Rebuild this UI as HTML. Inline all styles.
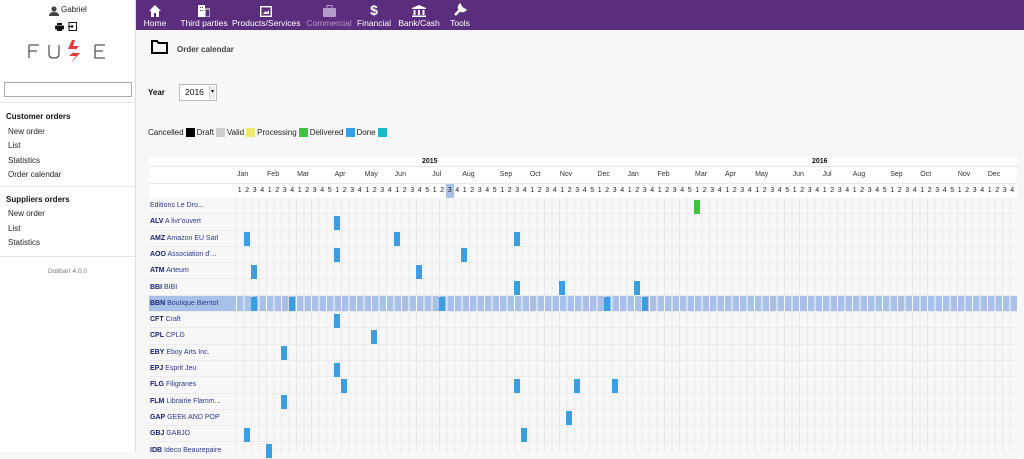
<!DOCTYPE html>
<html><head><meta charset="utf-8"><style>
*{margin:0;padding:0;box-sizing:border-box}
body{width:1024px;height:452px;overflow:hidden;background:#f7f7f7;font-family:"Liberation Sans",sans-serif;position:relative}
.side{position:absolute;left:0;top:0;width:136px;height:452px;background:#fff;border-right:1px solid #ddd}
.top{position:absolute;left:136px;top:0;width:888px;height:30px;background:#5a2d7d}
.nav{position:absolute;top:0;height:30px;color:#fff;font-size:8.5px;text-align:center;white-space:nowrap}
.nav .ic{height:17px;display:flex;justify-content:center;align-items:flex-end}
.nav .t{margin-top:1px}
.a{position:absolute}
.sm{font-size:8px;color:#222}
.b{position:absolute;width:6px;height:14px;background:#3a9ee0}
.row{position:absolute;left:149px;width:868px;height:16.3px;border-bottom:1px solid #ececec;font-size:7px;color:#2c3a8c;line-height:16px;padding-left:1px}
.row b{color:#1a2070}
.grid{position:absolute;left:236px;top:198px;width:781px;height:254px;background:repeating-linear-gradient(90deg,#e9e9e9 0,#e9e9e9 1px,transparent 1px,transparent 7.51px)}
.wk{position:absolute;left:236px;top:183px;display:flex;font-size:7px;color:#222;line-height:15px}
.wk span{width:7.51px;text-align:center;flex:none}
.mo{position:absolute;left:236px;top:166px;display:flex;font-size:7px;color:#333;line-height:17px}
.mo span{flex:none;padding-left:1px}
</style></head><body>
<div class="side">
 <div class="a" style="left:49px;top:3px;width:10px;height:10px">
  <svg width="10" height="10" viewBox="0 0 10 10"><circle cx="5" cy="3" r="2.6" fill="#444"/><path d="M0 10 Q0 6 5 6 Q10 6 10 10Z" fill="#444"/></svg></div>
 <div class="a" style="left:61px;top:5px;font-size:8px;color:#222">Gabriel</div>
 <div class="a" style="left:55px;top:18px"><svg width="9" height="8"><rect x="2" y="0" width="5" height="2" fill="#111"/><rect x="0" y="2.5" width="9" height="4" rx="1" fill="#111"/><rect x="2" y="5" width="5" height="3" fill="#111"/></svg></div>
 <div class="a" style="left:68px;top:18px"><svg width="9" height="9"><rect x="1" y="0.5" width="7.5" height="8" fill="none" stroke="#111"/><path d="M0 4.5H5M3.5 3L5 4.5 3.5 6" stroke="#111" fill="none"/></svg></div>
 <div class="a" style="left:28px;top:38px;width:80px;height:26px">
  <svg width="80" height="26"><g stroke="#555" stroke-width="1.3" fill="none"><path d="M1 7H11M1 7V20M1 13H9"/><path d="M21 7V16Q21 20 26 20Q31 20 31 16V7"/><path d="M67 7H77M67 7V20H77M67 13H75"/></g><path d="M44 2L40 11H49L41 18H48L43 25L52 15H45L51 8H45L47 2Z" fill="#e33a3a"/></svg></div>
 <div class="a" style="left:4px;top:82px;width:128px;height:15px;border:1px solid #aaa;background:#fff"></div>
 <div class="a" style="left:0;top:102px;width:135px;border-top:1px solid #e4e4e4"></div>
 <div class="a" style="left:6px;top:112px;font-size:8px;font-weight:bold;color:#111">Customer orders</div>
 <div class="a sm" style="left:8px;top:127px">New order</div>
 <div class="a sm" style="left:8px;top:141px">List</div>
 <div class="a sm" style="left:8px;top:156px">Statistics</div>
 <div class="a sm" style="left:8px;top:170px">Order calendar</div>
 <div class="a" style="left:0;top:186px;width:135px;border-top:1px solid #e4e4e4"></div>
 <div class="a" style="left:6px;top:195px;font-size:8px;font-weight:bold;color:#111">Suppliers orders</div>
 <div class="a sm" style="left:8px;top:209px">New order</div>
 <div class="a sm" style="left:8px;top:224px">List</div>
 <div class="a sm" style="left:8px;top:238px">Statistics</div>
 <div class="a" style="left:0;top:256px;width:135px;border-top:1px solid #e4e4e4"></div>
 <div class="a" style="left:0;top:268px;width:135px;text-align:center;font-size:6.5px;color:#777">Dolibarr 4.0.0</div>
</div>
<div class="top"></div>
<div class="nav" style="left:140px;width:30px"><div class="ic"><svg width="12" height="12"><path d="M6 0L0 6H2V12H5V8H7V12H10V6H12Z" fill="#fff"/></svg></div><div class="t">Home</div></div>
<div class="nav" style="left:179px;width:50px"><div class="ic"><svg width="12" height="12"><rect x="0" y="0" width="7" height="12" fill="#fff"/><rect x="7" y="4" width="5" height="8" fill="none" stroke="#fff"/><rect x="2" y="2" width="1" height="1" fill="#5a2d7d"/><rect x="4" y="2" width="1" height="1" fill="#5a2d7d"/><rect x="2" y="5" width="1" height="1" fill="#5a2d7d"/><rect x="4" y="5" width="1" height="1" fill="#5a2d7d"/></svg></div><div class="t">Third parties</div></div>
<div class="nav" style="left:232px;width:68px"><div class="ic"><svg width="12" height="11"><rect x="0.7" y="0.7" width="10.6" height="9.6" fill="none" stroke="#fff" stroke-width="1.4"/><path d="M3 8L5.5 5 7 6.5 9 4V8Z" fill="#fff"/></svg></div><div class="t">Products/Services</div></div>
<div class="nav" style="left:306px;width:46px;color:#b59ac9"><div class="ic"><svg width="13" height="12"><rect x="0" y="3" width="13" height="9" rx="1" fill="#b59ac9"/><rect x="4" y="0.5" width="5" height="3" fill="none" stroke="#b59ac9"/></svg></div><div class="t">Commercial</div></div>
<div class="nav" style="left:356px;width:36px"><div class="ic" style="font-size:14px;font-weight:bold;line-height:14px">$</div><div class="t">Financial</div></div>
<div class="nav" style="left:397px;width:44px"><div class="ic"><svg width="14" height="12"><path d="M7 0L0 3V4H14V3Z" fill="#fff"/><rect x="1.5" y="5" width="2" height="5" fill="#fff"/><rect x="6" y="5" width="2" height="5" fill="#fff"/><rect x="10.5" y="5" width="2" height="5" fill="#fff"/><rect x="0" y="10.5" width="14" height="1.5" fill="#fff"/></svg></div><div class="t">Bank/Cash</div></div>
<div class="nav" style="left:447px;width:26px"><div class="ic"><svg width="14" height="14"><path d="M2 12L8 6M7 2A3 3 0 1 0 12 7L10 6 8 4Z" stroke="#fff" stroke-width="2.5" fill="#fff"/></svg></div><div class="t">Tools</div></div>

<div class="a" style="left:151px;top:40px"><svg width="17" height="14"><path d="M1 1H6L7.5 3H16V13H1Z" fill="none" stroke="#000" stroke-width="2"/></svg></div>
<div class="a" style="left:177px;top:45px;font-size:8px;font-weight:bold;color:#444">Order calendar</div>
<div class="a" style="left:148px;top:88px;font-size:8px;font-weight:bold;color:#111">Year</div>
<div class="a" style="left:179px;top:84px;width:38px;height:17px;background:#fff;border:1px solid #bbb;font-size:8.5px;line-height:15px;padding-left:5px;color:#111">2016<span style="position:absolute;right:1px;top:1px;width:6px;height:13px;background:#eee;border-left:1px solid #ccc;font-size:6px;line-height:13px;text-align:center">▾</span></div>
<div class="a" style="left:148px;top:128px;font-size:8px;color:#222;display:flex;align-items:center;gap:2px;white-space:nowrap">Cancelled<i style="width:9px;height:9px;background:#000"></i> Draft <i style="width:9px;height:9px;background:#ccc"></i> Valid <i style="width:9px;height:9px;background:#eeea70"></i> Processing<i style="width:9px;height:9px;background:#3dc43d"></i> Delivered<i style="width:9px;height:9px;background:#3a9ee0"></i> Done <i style="width:9px;height:9px;background:#1bb8c9"></i></div>

<div class="a" style="left:149px;top:157px;width:868px;height:41px;background:#fff"></div>
<div class="a" style="left:149px;top:166px;width:868px;border-top:1px solid #e8e8e8"></div>
<div class="a" style="left:149px;top:183px;width:868px;border-top:1px solid #e8e8e8"></div>
<div class="a" style="left:422px;top:157px;font-size:7px;font-weight:bold;color:#111;line-height:10px">2015</div>
<div class="a" style="left:812px;top:157px;font-size:7px;font-weight:bold;color:#111;line-height:10px">2016</div>
<div class="mo">
<span style="width:30.04px">Jan</span><span style="width:30.04px">Feb</span><span style="width:37.55px">Mar</span><span style="width:30.04px">Apr</span><span style="width:30.04px">May</span><span style="width:37.55px">Jun</span><span style="width:30.04px">Jul</span><span style="width:37.55px">Aug</span><span style="width:30.04px">Sep</span><span style="width:30.04px">Oct</span><span style="width:37.55px">Nov</span><span style="width:30.04px">Dec</span>
<span style="width:30.04px">Jan</span><span style="width:37.55px">Feb</span><span style="width:30.04px">Mar</span><span style="width:30.04px">Apr</span><span style="width:37.55px">May</span><span style="width:30.04px">Jun</span><span style="width:30.04px">Jul</span><span style="width:37.55px">Aug</span><span style="width:30.04px">Sep</span><span style="width:37.55px">Oct</span><span style="width:30.04px">Nov</span><span style="width:30.04px">Dec</span>
</div>
<div class="a" style="left:446.3px;top:184px;width:7.5px;height:14px;background:#a9c1e8"></div>
<div class="wk">
<span>1</span><span>2</span><span>3</span><span>4</span><span>1</span><span>2</span><span>3</span><span>4</span><span>1</span><span>2</span><span>3</span><span>4</span><span>5</span><span>1</span><span>2</span><span>3</span><span>4</span><span>1</span><span>2</span><span>3</span><span>4</span><span>1</span><span>2</span><span>3</span><span>4</span><span>5</span><span>1</span><span>2</span><span>3</span><span>4</span><span>1</span><span>2</span><span>3</span><span>4</span><span>5</span><span>1</span><span>2</span><span>3</span><span>4</span><span>1</span><span>2</span><span>3</span><span>4</span><span>1</span><span>2</span><span>3</span><span>4</span><span>5</span><span>1</span><span>2</span><span>3</span><span>4</span>
<span>1</span><span>2</span><span>3</span><span>4</span><span>1</span><span>2</span><span>3</span><span>4</span><span>5</span><span>1</span><span>2</span><span>3</span><span>4</span><span>1</span><span>2</span><span>3</span><span>4</span><span>1</span><span>2</span><span>3</span><span>4</span><span>5</span><span>1</span><span>2</span><span>3</span><span>4</span><span>1</span><span>2</span><span>3</span><span>4</span><span>1</span><span>2</span><span>3</span><span>4</span><span>5</span><span>1</span><span>2</span><span>3</span><span>4</span><span>1</span><span>2</span><span>3</span><span>4</span><span>5</span><span>1</span><span>2</span><span>3</span><span>4</span><span>1</span><span>2</span><span>3</span><span>4</span>
</div>

<div class="a" style="left:149px;top:198px;width:868px;height:254px;background:#f7f7f7"></div>
<div class="a" style="left:149px;top:295.8px;width:868px;height:16.3px;background:#a9c1e8"></div>
<div class="grid"></div>
<div class="grid" style="top:295.8px;height:16.3px;background:repeating-linear-gradient(90deg,#fff 0,#fff 1px,transparent 1px,transparent 7.51px);opacity:.7"></div>

<div class="row" style="top:198px">Editions Le Dro...</div>
<div class="row" style="top:214.3px"><b>ALV</b> A livr'ouvert</div>
<div class="row" style="top:230.6px"><b>AMZ</b> Amazon EU Sarl</div>
<div class="row" style="top:246.9px"><b>AOO</b> Association d'...</div>
<div class="row" style="top:263.2px"><b>ATM</b> Arteum</div>
<div class="row" style="top:279.5px"><b>BBI</b> BIBI</div>
<div class="row" style="top:295.8px"><b>BBN</b> Boutique Bientot</div>
<div class="row" style="top:312.1px"><b>CFT</b> Craft</div>
<div class="row" style="top:328.4px"><b>CPL</b> CPLG</div>
<div class="row" style="top:344.7px"><b>EBY</b> Eboy Arts Inc.</div>
<div class="row" style="top:361px"><b>EPJ</b> Esprit Jeu</div>
<div class="row" style="top:377.3px"><b>FLG</b> Filigranes</div>
<div class="row" style="top:393.6px"><b>FLM</b> Librairie Flamm...</div>
<div class="row" style="top:409.9px"><b>GAP</b> GEEK AND POP</div>
<div class="row" style="top:426.2px"><b>GBJ</b> GABJO</div>
<div class="row" style="top:442.5px"><b>IDB</b> Ideco Beaurepaire</div>

<div class="b" style="left:694.1px;top:199.5px;background:#3dc43d"></div>
<div class="b" style="left:333.6px;top:215.8px"></div>
<div class="b" style="left:243.5px;top:232.1px"></div><div class="b" style="left:393.7px;top:232.1px"></div><div class="b" style="left:513.9px;top:232.1px"></div>
<div class="b" style="left:333.6px;top:248.4px"></div><div class="b" style="left:461.3px;top:248.4px"></div>
<div class="b" style="left:251px;top:264.7px"></div><div class="b" style="left:416.2px;top:264.7px"></div>
<div class="b" style="left:513.9px;top:281px"></div><div class="b" style="left:558.9px;top:281px"></div><div class="b" style="left:634px;top:281px"></div>
<div class="b" style="left:251px;top:297.3px"></div><div class="b" style="left:288.6px;top:297.3px"></div><div class="b" style="left:438.8px;top:297.3px"></div><div class="b" style="left:604px;top:297.3px"></div><div class="b" style="left:641.5px;top:297.3px"></div>
<div class="b" style="left:333.6px;top:313.6px"></div>
<div class="b" style="left:371.2px;top:329.9px"></div>
<div class="b" style="left:281.1px;top:346.2px"></div>
<div class="b" style="left:333.6px;top:362.5px"></div>
<div class="b" style="left:341.1px;top:378.8px"></div><div class="b" style="left:513.9px;top:378.8px"></div><div class="b" style="left:574px;top:378.8px"></div><div class="b" style="left:611.5px;top:378.8px"></div>
<div class="b" style="left:281.1px;top:395.1px"></div>
<div class="b" style="left:566.4px;top:411.4px"></div>
<div class="b" style="left:243.5px;top:427.7px"></div><div class="b" style="left:521.4px;top:427.7px"></div>
<div class="b" style="left:266px;top:444px"></div>
</body></html>
